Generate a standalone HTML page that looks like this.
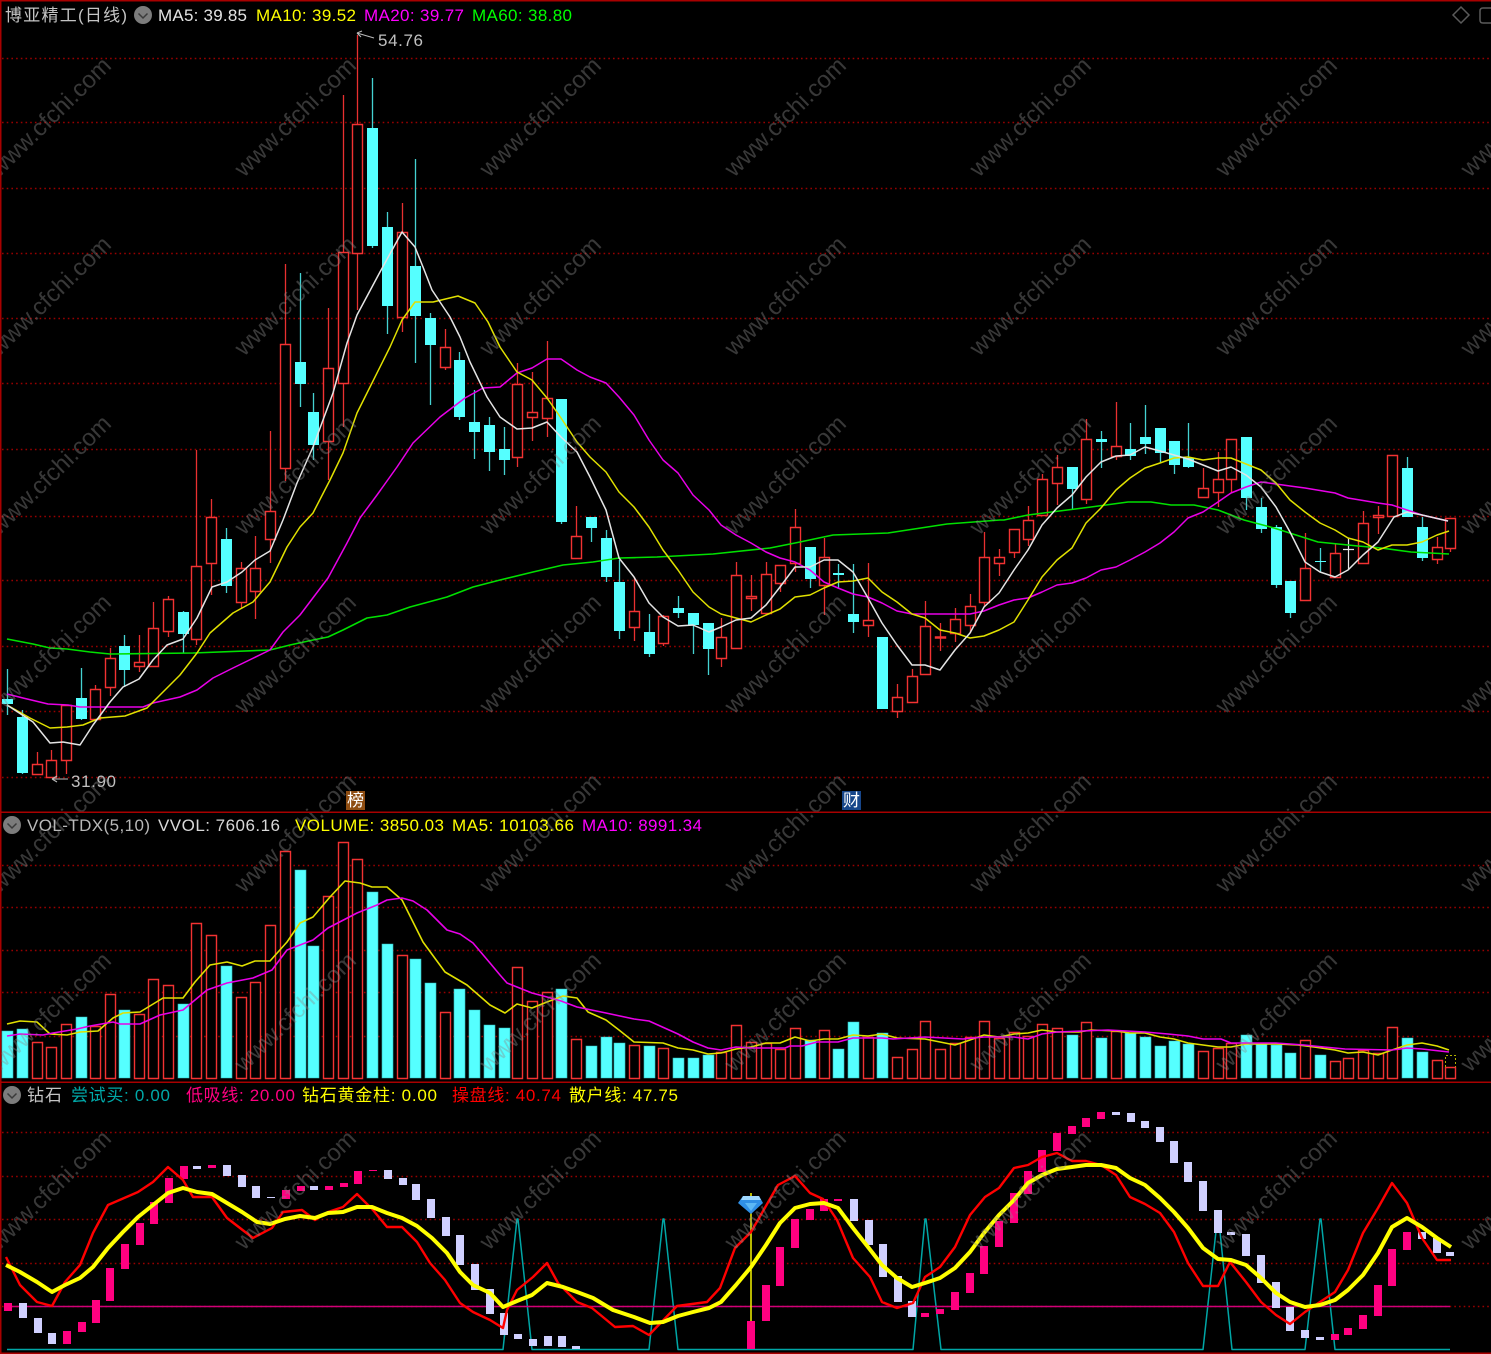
<!DOCTYPE html>
<html><head><meta charset="utf-8"><title>博亚精工</title>
<style>
html,body{margin:0;padding:0;background:#000;width:1491px;height:1354px;overflow:hidden}
svg{display:block;filter:blur(.35px)}
text{font-family:"Liberation Sans","Noto Sans CJK SC",sans-serif;font-size:17px}
.wm text{font-size:24px;fill:#8c8c8c;fill-opacity:.4}
polyline{fill:none;stroke-linejoin:round}
</style></head><body>
<svg xmlns="http://www.w3.org/2000/svg" width="1491" height="1354" viewBox="0 0 1491 1354">
<rect width="1491" height="1354" fill="#000"/>
<!-- grid -->
<path fill="none" stroke="#980000" stroke-width="1.5" stroke-dasharray="1.6 3.1" d="M2 58.5H1491M2 122.5H1491M2 188.5H1491M2 253.5H1491M2 318.5H1491M2 383.5H1491M2 449.5H1491M2 516.5H1491M2 580.5H1491M2 646.5H1491M2 711.5H1491M2 777.5H1491M2 865.5H1491M2 907.5H1491M2 950.5H1491M2 992.5H1491M2 1036.5H1491M2 1132.5H1491M2 1176.5H1491M2 1219.5H1491M2 1263.5H1491M2 1306.5H1491"/>
<!-- red wicks -->
<path fill="none" stroke="#e83030" stroke-width="1.3" d="M37.5 752V775M51.5 750V777M66.5 705V774M95.5 685V720M110.5 648V696M139.5 635V672M153.5 602V667M168.5 596V637M196.5 450V645M211.5 499V595M241.5 562V608M255.5 536V619M270.5 431V563M285.5 264V481M328.5 308V480M343.5 95V427M357.5 35V310M402.5 203V332M445.5 329V370M517.5 363V467M532.5 372V441M547.5 341V437M576.5 506V559M634.5 577V641M663.5 615V646M721.5 618V667M736.5 562V648M751.5 575V611M766.5 562V613M780.5 565V592M795.5 509V572M824.5 538V615M868.5 563V637M897.5 684V718M912.5 669V702M925.5 601V674M940.5 623V651M955.5 608V642M970.5 594V633M984.5 532V607M999.5 549V576M1014.5 529V558M1028.5 506V546M1042.5 474V515M1057.5 455V505M1086.5 419V504M1116.5 402V460M1203.5 468V498M1218.5 452V507M1231.5 439V493M1305.5 533V600M1335.5 543V578M1363.5 511V563M1378.5 506V534M1392.5 455V516M1437.5 537V564M1450.5 518V552"/>
<!-- red bodies -->
<path fill="#000" stroke="#f23232" stroke-width="1.4" d="M32.5 764.5h10v10h-10zM46.5 760.5h10v17h-10zM61.5 705.5h10v55h-10zM90.5 689.5h10v30h-10zM105.5 658.5h10v29h-10zM134.5 662.5h10v4h-10zM148.5 628.5h10v38h-10zM163.5 599.5h10v32h-10zM191.5 566.5h10v73h-10zM206.5 517.5h10v46h-10zM236.5 568.5h10v34h-10zM250.5 568.5h10v23h-10zM265.5 511.5h10v28h-10zM280.5 344.5h10v124h-10zM323.5 368.5h10v73h-10zM338.5 252.5h10v131h-10zM352.5 124.5h10v129h-10zM397.5 232.5h10v85h-10zM440.5 347.5h10v20h-10zM512.5 384.5h10v73h-10zM527.5 412.5h10v5h-10zM542.5 398.5h10v20h-10zM571.5 536.5h10v22h-10zM629.5 611.5h10v16h-10zM658.5 616.5h10v27h-10zM716.5 637.5h10v21h-10zM731.5 575.5h10v73h-10zM746.5 596.5h10v2h-10zM761.5 574.5h10v39h-10zM775.5 565.5h10v18h-10zM790.5 527.5h10v36h-10zM819.5 557.5h10v28h-10zM863.5 620.5h10v5h-10zM892.5 697.5h10v14h-10zM907.5 676.5h10v26h-10zM920.5 626.5h10v48h-10zM935.5 637h10v1h-10zM950.5 619.5h10v14h-10zM965.5 606.5h10v19h-10zM979.5 557.5h10v45h-10zM994.5 557.5h10v6h-10zM1009.5 529.5h10v23h-10zM1023.5 520.5h10v19h-10zM1037.5 479.5h10v36h-10zM1052.5 467.5h10v16h-10zM1081.5 439.5h10v60h-10zM1111.5 446.5h10v10h-10zM1198.5 488.5h10v9h-10zM1213.5 479.5h10v13h-10zM1226.5 439.5h10v40h-10zM1300.5 568.5h10v32h-10zM1330.5 553.5h10v24h-10zM1358.5 523.5h10v40h-10zM1373.5 515.5h10v2h-10zM1387.5 455.5h10v61h-10zM1432.5 547.5h10v12h-10zM1445.5 518.5h10v30h-10z"/>
<!-- cyan wicks -->
<path fill="none" stroke="#45d2d2" stroke-width="1.3" d="M7.5 669V715M22.5 710V774M81.5 668V720M124.5 635V687M183.5 611V653M226.5 528V593M300.5 273V407M313.5 393V460M372.5 78V248M387.5 212V334M415.5 159V363M430.5 313V405M459.5 352V420M474.5 390V459M489.5 417V471M504.5 427V475M561.5 399V524M591.5 517V542M606.5 530V582M619.5 560V639M649.5 614V657M678.5 596V618M693.5 613V654M708.5 623V675M810.5 547V588M838.5 564V589M853.5 564V633M882.5 637V709M1072.5 467V509M1101.5 431V468M1130.5 423V460M1145.5 405V454M1160.5 428V463M1174.5 441V474M1188.5 423V468M1246.5 437V510M1261.5 498V533M1276.5 525V588M1290.5 581V618M1320.5 548V572M1407.5 457V517M1422.5 517V561"/>
<!-- cyan bodies -->
<path fill="#55ffff" d="M2 699h11v5h-11zM17 717h11v56h-11zM76 698h11v21h-11zM119 646h11v24h-11zM178 612h11v22h-11zM221 539h11v47h-11zM295 362h11v22h-11zM308 412h11v33h-11zM367 128h11v118h-11zM382 227h11v79h-11zM410 266h11v50h-11zM425 318h11v27h-11zM454 360h11v57h-11zM469 422h11v10h-11zM484 425h11v27h-11zM499 449h11v11h-11zM556 399h11v123h-11zM586 517h11v11h-11zM601 538h11v39h-11zM614 582h11v49h-11zM644 632h11v22h-11zM673 608h11v5h-11zM688 613h11v12h-11zM703 623h11v26h-11zM805 547h11v32h-11zM833 573h11v2h-11zM848 614h11v8h-11zM877 637h11v72h-11zM1067 467h11v22h-11zM1096 439h11v3h-11zM1125 449h11v7h-11zM1140 437h11v7h-11zM1155 428h11v25h-11zM1169 441h11v24h-11zM1183 458h11v9h-11zM1241 437h11v61h-11zM1256 507h11v22h-11zM1271 527h11v58h-11zM1285 581h11v32h-11zM1315 561h11v1h-11zM1402 468h11v49h-11zM1417 527h11v31h-11z"/>
<!-- doji white -->
<path fill="none" stroke="#e8e8e8" stroke-width="1.2" d="M1348.5 538V570M1343 549.5H1354"/>
<!-- MA60 green -->
<polyline stroke="#00e000" stroke-width="1.6" points="7,639 33,644 50,648 67,649 90,652 110,654 193,653 270,650 290,645 313,640 328,637 343,630 367,618 387,615 410,607 447,597 473,587 500,580 533,572 563,565 593,562 619,558 657,557 713,554 770,548 800,542 833,535 888,533 947,524 1000,520 1004,520 1028,515 1091,507 1128,502 1151,502 1171,505 1194,505 1218,510 1244,520 1274,528 1318,542 1358,546 1381,548 1411,552 1449,554"/>
<!-- MA20 magenta -->
<polyline stroke="#e800e8" stroke-width="1.5" points="7,694 23,698 48,704 68,705 80,707 143,707 153,703 180,697 197,690 213,678 233,668 270,650 283,632 300,615 328,578 347,543 360,518 377,495 397,467 413,443 440,417 465,398 483,388 500,387 517,373 532,368 547,359 561,359 577,370 590,377 606,383 619,397 634,415 649,440 663,460 678,473 693,495 709,510 721,525 736,535 751,543 766,552 780,558 795,562 810,570 824,582 838,588 853,594 868,597 882,603 897,611 912,614 940,614 970,614 984,611 999,605 1014,600 1028,598 1042,592 1057,585 1072,583 1086,578 1101,570 1116,567 1130,560 1145,552 1160,543 1174,532 1188,518 1203,512 1218,502 1231,493 1246,487 1261,482 1276,484 1290,486 1305,488 1335,493 1348,498 1378,503 1392,505 1407,510 1422,515 1448,521"/>
<!-- MA10 yellow -->
<polyline stroke="#e0e000" stroke-width="1.5" points="7,705 30,718 50,728 67,727 83,725 100,718 125,716 147,708 160,695 180,675 197,653 210,633 233,613 253,602 270,582 287,547 300,527 313,513 330,480 343,453 357,413 365,397 390,347 402,320 415,302 433,302 458,296 475,303 488,322 500,347 517,372 532,380 547,398 561,418 577,442 590,457 606,472 619,492 634,507 649,527 663,550 678,570 693,592 709,607 721,614 736,618 751,622 766,615 780,609 795,597 810,595 824,588 838,582 853,581 868,578 882,592 897,602 912,614 925,618 940,630 955,633 970,638 984,636 999,630 1014,622 1028,600 1042,577 1057,560 1072,548 1086,523 1101,508 1116,490 1130,478 1145,468 1160,463 1174,458 1188,457 1203,460 1218,458 1231,458 1246,464 1261,470 1276,483 1290,500 1305,512 1320,523 1335,530 1348,538 1363,542 1378,550 1392,545 1407,545 1422,542 1437,535 1449,531"/>
<!-- MA5 white -->
<polyline stroke="#e4e4e4" stroke-width="1.5" points="7,705 33,722 50,743 63,742 80,745 93,725 110,702 123,687 139,679 153,660 167,645 183,639 197,618 212,587 227,582 242,572 255,560 270,551 283,520 297,483 313,447 333,393 347,343 357,315 380,272 402,232 415,247 423,267 432,290 450,317 460,337 470,362 487,397 500,417 517,429 532,428 547,422 561,437 577,452 590,477 606,510 619,558 634,577 649,603 663,617 678,626 693,625 709,632 721,627 736,620 751,618 766,605 780,587 795,567 810,567 824,560 838,560 853,572 868,598 882,623 897,645 912,665 925,665 940,670 955,650 970,633 984,607 999,593 1014,570 1028,550 1042,525 1057,508 1072,495 1086,477 1101,462 1116,456 1130,455 1145,447 1160,451 1174,455 1188,459 1203,465 1218,471 1231,467 1246,475 1261,487 1276,507 1290,532 1305,562 1320,572 1335,577 1348,570 1363,555 1378,542 1394,517 1407,512 1422,515 1448,521"/>
<!-- high / low labels -->
<path fill="none" stroke="#b8b8b8" stroke-width="1.1" d="M357 33L374 38M357 33L362 31M357 33L361 37M52 779H68M52 779L57 776M52 779L57 782"/>
<text x="378" y="46" fill="#c0c0c0" textLength="45" lengthAdjust="spacing">54.76</text>
<text x="71" y="787" fill="#c0c0c0" textLength="45" lengthAdjust="spacing">31.90</text>
<!-- tags -->
<rect x="346" y="791" width="19" height="19" fill="#8e4d12"/>
<text x="347" y="806" fill="#fff" style="font-size:17px">榜</text>
<rect x="842" y="791" width="19" height="19" fill="#17468a"/>
<text x="843" y="806" fill="#fff" style="font-size:17px">财</text>

<!-- VOLUME bars -->
<path fill="#55ffff" stroke="#3bb" stroke-width=".6" d="M2 1031h11v47h-11zM17 1029h11v49h-11zM76 1017h11v61h-11zM119 1010h11v68h-11zM178 1004h11v74h-11zM221 966h11v112h-11zM295 870h11v208h-11zM308 946h11v132h-11zM367 892h11v186h-11zM382 944h11v134h-11zM410 959h11v119h-11zM425 983h11v95h-11zM454 989h11v89h-11zM469 1010h11v68h-11zM484 1025h11v53h-11zM499 1028h11v50h-11zM556 989h11v89h-11zM586 1046h11v32h-11zM601 1037h11v41h-11zM614 1043h11v35h-11zM644 1046h11v32h-11zM673 1058h11v20h-11zM688 1058h11v20h-11zM703 1055h11v23h-11zM805 1040h11v38h-11zM833 1049h11v29h-11zM848 1022h11v56h-11zM877 1033h11v45h-11zM1067 1035h11v43h-11zM1096 1038h11v40h-11zM1125 1033h11v45h-11zM1140 1037h11v41h-11zM1155 1046h11v32h-11zM1169 1041h11v37h-11zM1183 1044h11v34h-11zM1241 1035h11v43h-11zM1256 1044h11v34h-11zM1271 1045h11v33h-11zM1285 1053h11v25h-11zM1315 1055h11v23h-11zM1402 1038h11v40h-11zM1417 1052h11v26h-11z"/>
<path fill="#000" stroke="#f23232" stroke-width="1.4" d="M32.5 1042.5h10v36h-10zM46.5 1047.5h10v31h-10zM61.5 1024.5h10v54h-10zM90.5 1026.5h10v52h-10zM105.5 994.5h10v84h-10zM134.5 1014.5h10v64h-10zM148.5 979.5h10v99h-10zM163.5 985.5h10v93h-10zM191.5 923.5h10v155h-10zM206.5 935.5h10v143h-10zM236.5 997.5h10v81h-10zM250.5 982.5h10v96h-10zM265.5 925.5h10v153h-10zM280.5 851.5h10v227h-10zM323.5 896.5h10v182h-10zM338.5 842.5h10v236h-10zM352.5 859.5h10v219h-10zM397.5 955.5h10v123h-10zM440.5 1012.5h10v66h-10zM512.5 967.5h10v111h-10zM527.5 1001.5h10v77h-10zM542.5 992.5h10v86h-10zM571.5 1039.5h10v39h-10zM629.5 1045.5h10v33h-10zM658.5 1048.5h10v30h-10zM716.5 1052.5h10v26h-10zM731.5 1025.5h10v53h-10zM746.5 1042.5h10v36h-10zM761.5 1043.5h10v35h-10zM775.5 1049.5h10v29h-10zM790.5 1028.5h10v50h-10zM819.5 1030.5h10v48h-10zM863.5 1037.5h10v41h-10zM892.5 1057.5h10v21h-10zM907.5 1049.5h10v29h-10zM920.5 1021.5h10v57h-10zM935.5 1049.5h10v29h-10zM950.5 1043.5h10v35h-10zM965.5 1037.5h10v41h-10zM979.5 1021.5h10v57h-10zM994.5 1038.5h10v40h-10zM1009.5 1032.5h10v46h-10zM1023.5 1036.5h10v42h-10zM1037.5 1024.5h10v54h-10zM1052.5 1028.5h10v50h-10zM1081.5 1022.5h10v56h-10zM1111.5 1031.5h10v47h-10zM1198.5 1051.5h10v27h-10zM1213.5 1048.5h10v30h-10zM1226.5 1043.5h10v35h-10zM1300.5 1040.5h10v38h-10zM1330.5 1061.5h10v17h-10zM1343.5 1058.5h10v20h-10zM1358.5 1050.5h10v28h-10zM1373.5 1053.5h10v25h-10zM1387.5 1027.5h10v51h-10zM1432.5 1060.5h10v18h-10zM1445.5 1067.5h10v11h-10z"/>
<path fill="none" stroke="#b0b000" stroke-width="1" stroke-dasharray="2 2" d="M1445.5 1067V1055.5H1455.5V1067"/>
<!-- VOL lines -->
<polyline stroke="#e0e000" stroke-width="1.6" points="7,1024 20,1021 37,1022 50,1034 67,1035 80,1032 98,1031 113,1018 123,1013 140,1012 163,998 183,998 195,982 210,965 227,962 242,966 255,961 270,961 287,942 300,923 313,917 330,897 345,881 360,883 372,887 387,887 402,900 423,942 445,972 467,985 490,1005 505,1013 517,1004 532,1008 547,1002 563,996 577,998 588,1012 606,1020 619,1030 634,1042 663,1043 678,1048 693,1050 708,1054 721,1053 736,1049 751,1047 766,1043 780,1043 795,1037 810,1041 824,1039 838,1039 853,1035 868,1036 882,1034 897,1038 925,1039 940,1042 955,1045 970,1040 984,1035 999,1037 1014,1034 1028,1033 1042,1030 1057,1032 1079,1032 1091,1030 1116,1031 1130,1033 1145,1033 1160,1037 1174,1039 1188,1043 1203,1045 1218,1047 1231,1047 1246,1044 1276,1044 1298,1045 1314,1047 1335,1050 1348,1053 1363,1052 1378,1055 1392,1050 1407,1045 1422,1043 1437,1046 1449,1050"/>
<polyline stroke="#e800e8" stroke-width="1.6" points="7,1036 20,1034 43,1035 53,1033 77,1029 90,1026 113,1022 120,1024 140,1024 160,1015 183,1010 207,990 227,983 253,978 272,970 287,950 313,940 328,928 357,913 377,905 387,900 402,898 413,901 427,910 447,930 460,934 473,943 490,963 500,975 507,983 517,987 532,993 547,997 561,1001 577,1007 606,1013 634,1019 649,1021 678,1034 693,1042 708,1048 721,1050 736,1047 751,1048 785,1048 790,1046 802,1046 817,1042 838,1042 853,1038 882,1038 893,1039 925,1037 963,1039 984,1037 999,1037 1014,1037 1028,1039 1042,1034 1057,1032 1108,1030 1145,1032 1168,1034 1188,1036 1203,1039 1221,1039 1231,1043 1254,1043 1276,1043 1304,1045 1324,1047 1345,1049 1392,1050 1407,1048 1422,1049 1449,1052"/>

<!-- Pane 3 -->
<polyline stroke="#00a6a6" stroke-width="1.5" points="7,1349.5 503,1349.5 517,1219 518,1219 532,1349.5 649,1349.5 663,1219 664,1219 678,1349.5 913,1349.5 925,1219 926,1219 941,1349.5 1203,1349.5 1217,1222 1219,1222 1232,1349.5 1305,1349.5 1320,1219 1321,1219 1335,1349.5 1450,1349.5"/>
<path stroke="#d00078" stroke-width="1.5" d="M7 1306.5H1450"/>
<path fill="#ff0080" d="M4 1303h8v8h-8zM63 1331h8v13h-8zM78 1322h8v10h-8zM92 1300h8v23h-8zM106 1268h8v33h-8zM121 1244h8v25h-8zM136 1223h8v22h-8zM150 1202h8v22h-8zM165 1178h8v25h-8zM180 1166h8v13h-8zM208 1165h8v3h-8zM282 1190h8v9h-8zM297 1186h8v5h-8zM325 1186h8v4h-8zM340 1183h8v4h-8zM354 1171h8v13h-8zM369 1170h8v1h-8zM747 1321h8v28h-8zM762 1285h8v36h-8zM776 1247h8v39h-8zM791 1219h8v29h-8zM806 1209h8v11h-8zM820 1199h8v12h-8zM834 1199h8v2h-8zM921 1313h8v4h-8zM936 1309h8v5h-8zM951 1292h8v18h-8zM966 1273h8v20h-8zM980 1246h8v28h-8zM995 1221h8v26h-8zM1010 1193h8v30h-8zM1024 1171h8v23h-8zM1038 1150h8v22h-8zM1053 1133h8v18h-8zM1068 1126h8v8h-8zM1082 1118h8v9h-8zM1097 1112h8v7h-8zM1331 1334h8v6h-8zM1344 1328h8v7h-8zM1359 1315h8v14h-8zM1374 1285h8v31h-8zM1388 1249h8v37h-8zM1403 1232h8v18h-8z"/>
<path fill="#d0d0ff" d="M19 1303h8v15h-8zM34 1318h8v15h-8zM48 1333h8v11h-8zM193 1166h8v3h-8zM223 1165h8v11h-8zM238 1175h8v12h-8zM252 1186h8v12h-8zM267 1197h8v1h-8zM310 1186h8v4h-8zM384 1170h8v9h-8zM399 1178h8v7h-8zM412 1184h8v16h-8zM427 1199h8v19h-8zM442 1217h8v19h-8zM456 1235h8v30h-8zM471 1264h8v26h-8zM486 1289h8v25h-8zM500 1313h8v22h-8zM514 1334h8v5h-8zM529 1339h8v7h-8zM544 1336h8v10h-8zM558 1336h8v11h-8zM572 1346h8v3h-8zM850 1199h8v22h-8zM865 1220h8v25h-8zM879 1244h8v33h-8zM894 1276h8v26h-8zM908 1301h8v16h-8zM1112 1112h8v3h-8zM1127 1113h8v9h-8zM1141 1121h8v7h-8zM1156 1127h8v15h-8zM1170 1141h8v22h-8zM1184 1162h8v20h-8zM1199 1181h8v30h-8zM1214 1210h8v23h-8zM1227 1232h8v3h-8zM1242 1234h8v22h-8zM1257 1255h8v28h-8zM1272 1282h8v26h-8zM1286 1307h8v24h-8zM1301 1330h8v8h-8zM1316 1337h8v3h-8zM1418 1232h8v7h-8zM1433 1238h8v15h-8zM1446 1252h8v4h-8z"/>
<path stroke="#f5f500" stroke-width="1.5" d="M751 1193V1321"/>
<!-- diamond -->
<path fill="#2f8fe6" d="M743 1196H759L763 1203L751 1214L738 1203Z"/>
<path fill="#9fd8ff" d="M743 1196H759L761 1200H741Z"/>
<path fill="#5cb8f5" d="M745 1203H757L751 1211Z"/>
<polyline stroke="#ff0000" stroke-width="2.4" points="6,1257 20,1285 37,1302 52,1306 65,1282 80,1265 93,1233 108,1205 138,1192 153,1182 168,1167 183,1180 193,1197 212,1197 227,1218 253,1238 272,1228 283,1212 302,1210 315,1220 328,1212 343,1207 357,1194 373,1210 387,1227 402,1227 417,1242 430,1263 445,1280 460,1303 473,1312 490,1320 503,1328 507,1310 517,1290 533,1277 547,1263 558,1283 577,1302 592,1308 615,1327 633,1326 649,1335 677,1306 707,1302 720,1288 735,1248 751,1232 778,1185 795,1176 810,1193 823,1199 837,1220 853,1258 870,1277 882,1302 897,1308 913,1303 925,1277 940,1267 955,1247 970,1215 985,1197 999,1188 1014,1168 1028,1165 1042,1157 1057,1153 1072,1161 1086,1161 1101,1165 1116,1175 1130,1197 1145,1204 1160,1213 1174,1232 1188,1263 1203,1286 1218,1286 1230,1262 1246,1282 1261,1302 1276,1315 1290,1324 1305,1312 1320,1302 1335,1292 1348,1270 1363,1233 1378,1208 1392,1183 1407,1203 1422,1238 1437,1260 1451,1260"/>
<polyline stroke="#ffff00" stroke-width="4" points="6,1265 20,1272 37,1282 52,1292 65,1285 80,1278 93,1267 108,1248 123,1232 138,1217 153,1205 168,1193 183,1188 197,1192 212,1194 227,1203 242,1212 257,1222 270,1224 285,1219 300,1216 315,1218 328,1213 343,1212 357,1207 372,1207 387,1213 402,1218 417,1226 432,1238 447,1253 460,1272 473,1285 490,1293 503,1307 517,1301 532,1295 547,1283 563,1287 577,1292 593,1298 613,1310 634,1317 650,1323 663,1322 678,1316 693,1312 709,1308 721,1302 736,1285 751,1267 766,1245 780,1223 795,1208 810,1204 824,1203 838,1208 853,1228 868,1247 882,1265 897,1278 912,1287 925,1283 940,1278 955,1268 970,1252 984,1233 999,1215 1014,1200 1028,1183 1042,1175 1057,1169 1072,1167 1086,1165 1101,1165 1116,1168 1130,1178 1145,1185 1160,1198 1174,1212 1188,1228 1203,1248 1218,1259 1231,1260 1246,1265 1261,1278 1276,1293 1290,1302 1305,1307 1320,1305 1335,1300 1348,1290 1363,1275 1378,1253 1392,1227 1407,1218 1422,1227 1437,1238 1451,1247"/>

<!-- watermark -->
<g class="wm">
<text transform="translate(-1 178) rotate(-44.3)">www.cfchi.com</text><text transform="translate(244 178) rotate(-44.3)">www.cfchi.com</text><text transform="translate(489 178) rotate(-44.3)">www.cfchi.com</text><text transform="translate(734 178) rotate(-44.3)">www.cfchi.com</text><text transform="translate(979 178) rotate(-44.3)">www.cfchi.com</text><text transform="translate(1225 178) rotate(-44.3)">www.cfchi.com</text><text transform="translate(1470 178) rotate(-44.3)">www.cfchi.com</text>
<text transform="translate(-1 357) rotate(-44.3)">www.cfchi.com</text><text transform="translate(244 357) rotate(-44.3)">www.cfchi.com</text><text transform="translate(489 357) rotate(-44.3)">www.cfchi.com</text><text transform="translate(734 357) rotate(-44.3)">www.cfchi.com</text><text transform="translate(979 357) rotate(-44.3)">www.cfchi.com</text><text transform="translate(1225 357) rotate(-44.3)">www.cfchi.com</text><text transform="translate(1470 357) rotate(-44.3)">www.cfchi.com</text>
<text transform="translate(-1 536) rotate(-44.3)">www.cfchi.com</text><text transform="translate(244 536) rotate(-44.3)">www.cfchi.com</text><text transform="translate(489 536) rotate(-44.3)">www.cfchi.com</text><text transform="translate(734 536) rotate(-44.3)">www.cfchi.com</text><text transform="translate(979 536) rotate(-44.3)">www.cfchi.com</text><text transform="translate(1225 536) rotate(-44.3)">www.cfchi.com</text><text transform="translate(1470 536) rotate(-44.3)">www.cfchi.com</text>
<text transform="translate(-1 715) rotate(-44.3)">www.cfchi.com</text><text transform="translate(244 715) rotate(-44.3)">www.cfchi.com</text><text transform="translate(489 715) rotate(-44.3)">www.cfchi.com</text><text transform="translate(734 715) rotate(-44.3)">www.cfchi.com</text><text transform="translate(979 715) rotate(-44.3)">www.cfchi.com</text><text transform="translate(1225 715) rotate(-44.3)">www.cfchi.com</text><text transform="translate(1470 715) rotate(-44.3)">www.cfchi.com</text>
<text transform="translate(-1 894) rotate(-44.3)">www.cfchi.com</text><text transform="translate(244 894) rotate(-44.3)">www.cfchi.com</text><text transform="translate(489 894) rotate(-44.3)">www.cfchi.com</text><text transform="translate(734 894) rotate(-44.3)">www.cfchi.com</text><text transform="translate(979 894) rotate(-44.3)">www.cfchi.com</text><text transform="translate(1225 894) rotate(-44.3)">www.cfchi.com</text><text transform="translate(1470 894) rotate(-44.3)">www.cfchi.com</text>
<text transform="translate(-1 1073) rotate(-44.3)">www.cfchi.com</text><text transform="translate(244 1073) rotate(-44.3)">www.cfchi.com</text><text transform="translate(489 1073) rotate(-44.3)">www.cfchi.com</text><text transform="translate(734 1073) rotate(-44.3)">www.cfchi.com</text><text transform="translate(979 1073) rotate(-44.3)">www.cfchi.com</text><text transform="translate(1225 1073) rotate(-44.3)">www.cfchi.com</text><text transform="translate(1470 1073) rotate(-44.3)">www.cfchi.com</text>
<text transform="translate(-1 1251) rotate(-44.3)">www.cfchi.com</text><text transform="translate(244 1251) rotate(-44.3)">www.cfchi.com</text><text transform="translate(489 1251) rotate(-44.3)">www.cfchi.com</text><text transform="translate(734 1251) rotate(-44.3)">www.cfchi.com</text><text transform="translate(979 1251) rotate(-44.3)">www.cfchi.com</text><text transform="translate(1225 1251) rotate(-44.3)">www.cfchi.com</text><text transform="translate(1470 1251) rotate(-44.3)">www.cfchi.com</text>
</g>

<!-- borders -->
<path fill="#a80000" d="M0 0H1491V1.5H0zM0 0H1.5V1354H0zM0 811.5H1491V813H0zM0 1081.5H1491V1083H0zM0 1352.5H1491V1354H0z"/>

<!-- header row 1 -->
<text x="5" y="21" fill="#c4c4c4" textLength="122" lengthAdjust="spacing">博亚精工(日线)</text>
<circle cx="143" cy="15" r="9" fill="#7c7c7c"/><path d="M138.5 13.5L143 18L147.5 13.5" fill="none" stroke="#3a3a3a" stroke-width="1.5"/>
<text x="158" y="21" fill="#e4e4e4" textLength="89" lengthAdjust="spacing">MA5: 39.85</text>
<text x="256" y="21" fill="#ffff00" textLength="100" lengthAdjust="spacing">MA10: 39.52</text>
<text x="364" y="21" fill="#ff00ff" textLength="100" lengthAdjust="spacing">MA20: 39.77</text>
<text x="472" y="21" fill="#00ff00" textLength="100" lengthAdjust="spacing">MA60: 38.80</text>
<path d="M1461 7L1469 15L1461 23L1453 15Z" fill="none" stroke="#5a5a5a" stroke-width="1.5"/>
<path d="M1491 8H1483Q1480 8 1480 11V20Q1480 23 1483 23H1491" fill="none" stroke="#5a5a5a" stroke-width="1.5"/>
<!-- header row 2 -->
<circle cx="12" cy="825" r="9" fill="#7c7c7c"/><path d="M7.5 823.5L12 828L16.5 823.5" fill="none" stroke="#3a3a3a" stroke-width="1.5"/>
<text x="27" y="831" fill="#b8b8b8" textLength="123" lengthAdjust="spacing">VOL-TDX(5,10)</text>
<text x="158" y="831" fill="#d8d8d8" textLength="122" lengthAdjust="spacing">VVOL: 7606.16</text>
<text x="295" y="831" fill="#ffff00" textLength="149" lengthAdjust="spacing">VOLUME: 3850.03</text>
<text x="452" y="831" fill="#ffff00" textLength="122" lengthAdjust="spacing">MA5: 10103.66</text>
<text x="582" y="831" fill="#ff00ff" textLength="120" lengthAdjust="spacing">MA10: 8991.34</text>
<!-- header row 3 -->
<circle cx="12" cy="1095" r="9" fill="#7c7c7c"/><path d="M7.5 1093.5L12 1098L16.5 1093.5" fill="none" stroke="#3a3a3a" stroke-width="1.5"/>
<text x="27" y="1101" fill="#c4c4c4" textLength="35" lengthAdjust="spacing">钻石</text>
<text x="71" y="1101" fill="#00a8a8" textLength="99" lengthAdjust="spacing">尝试买: 0.00</text>
<text x="186" y="1101" fill="#ff0080" textLength="109" lengthAdjust="spacing">低吸线: 20.00</text>
<text x="302" y="1101" fill="#ffff00" textLength="135" lengthAdjust="spacing">钻石黄金柱: 0.00</text>
<text x="452" y="1101" fill="#ff0000" textLength="109" lengthAdjust="spacing">操盘线: 40.74</text>
<text x="569" y="1101" fill="#ffff00" textLength="109" lengthAdjust="spacing">散户线: 47.75</text>
</svg>
</body></html>
